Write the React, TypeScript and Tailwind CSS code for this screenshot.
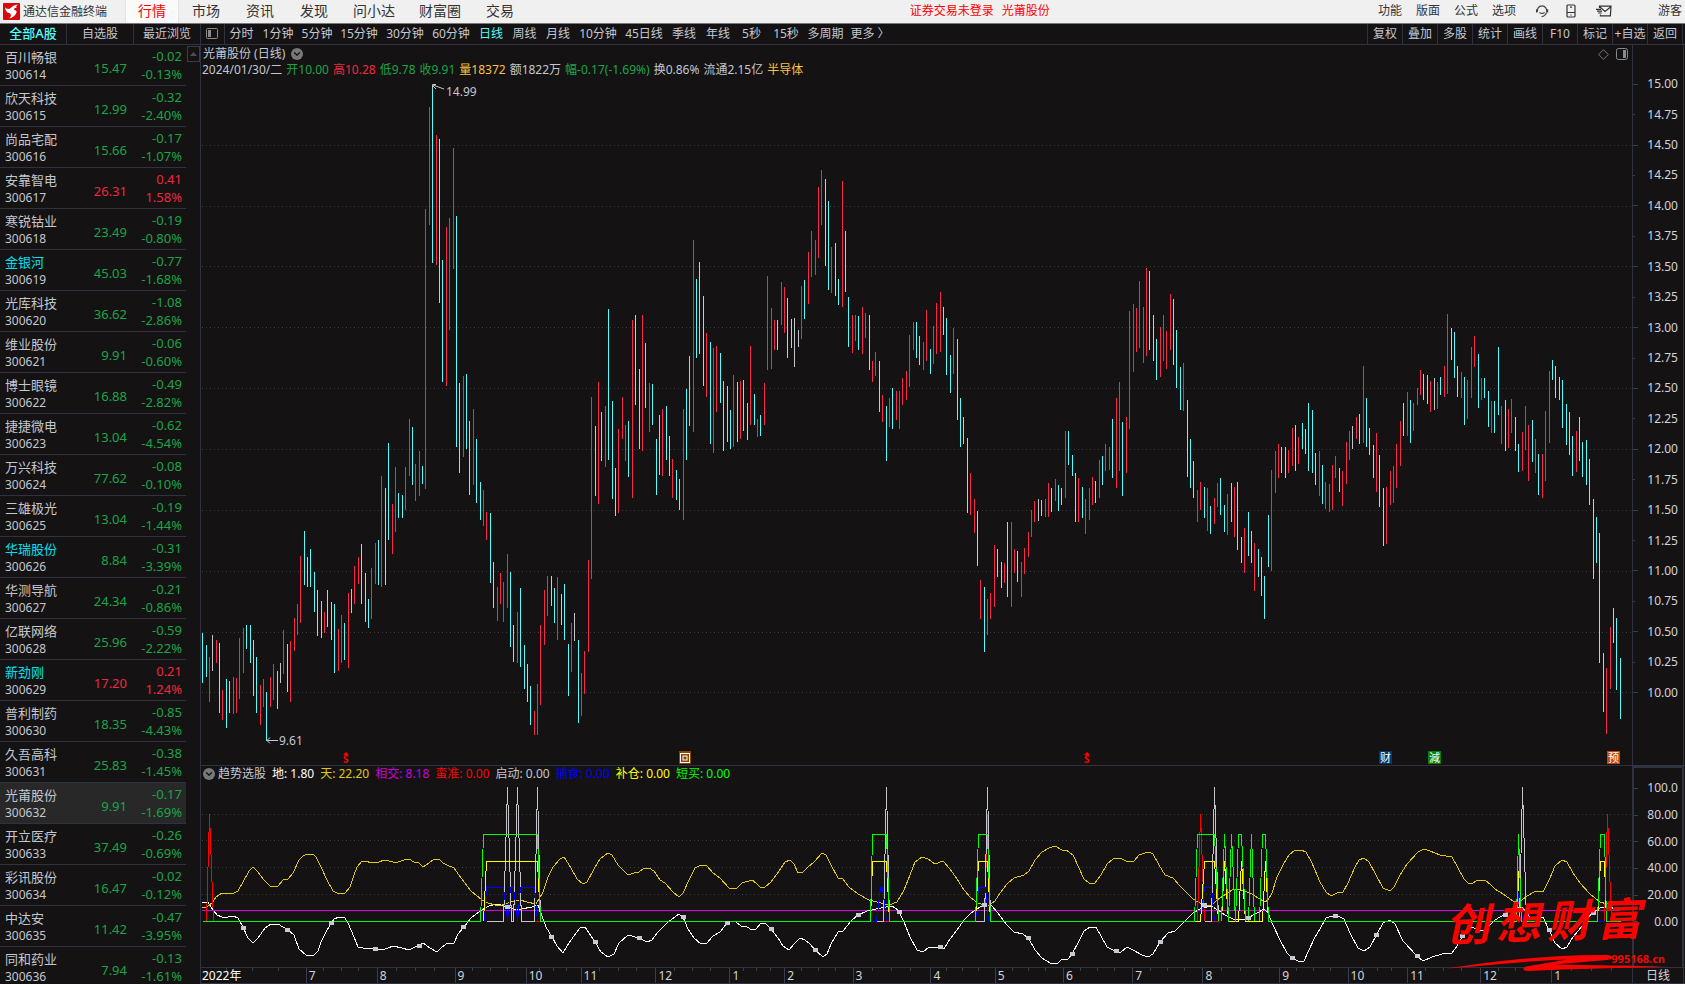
import React from "react";
import { ChevronDown } from "lucide-react";

type Stock = [name: string, code: string, price: string, change: string, pct: string, mark?: boolean];

const stocks: Stock[] = [
  ["百川畅银", "300614", "15.47", "-0.02", "-0.13%"],
  ["欣天科技", "300615", "12.99", "-0.32", "-2.40%"],
  ["尚品宅配", "300616", "15.66", "-0.17", "-1.07%"],
  ["安靠智电", "300617", "26.31", "0.41", "1.58%"],
  ["寒锐钴业", "300618", "23.49", "-0.19", "-0.80%"],
  ["金银河", "300619", "45.03", "-0.77", "-1.68%", true],
  ["光库科技", "300620", "36.62", "-1.08", "-2.86%"],
  ["维业股份", "300621", "9.91", "-0.06", "-0.60%"],
  ["博士眼镜", "300622", "16.88", "-0.49", "-2.82%"],
  ["捷捷微电", "300623", "13.04", "-0.62", "-4.54%"],
  ["万兴科技", "300624", "77.62", "-0.08", "-0.10%"],
  ["三雄极光", "300625", "13.04", "-0.19", "-1.44%"],
  ["华瑞股份", "300626", "8.84", "-0.31", "-3.39%", true],
  ["华测导航", "300627", "24.34", "-0.21", "-0.86%"],
  ["亿联网络", "300628", "25.96", "-0.59", "-2.22%"],
  ["新劲刚", "300629", "17.20", "0.21", "1.24%", true],
  ["普利制药", "300630", "18.35", "-0.85", "-4.43%"],
  ["久吾高科", "300631", "25.83", "-0.38", "-1.45%"],
  ["光莆股份", "300632", "9.91", "-0.17", "-1.69%"],
  ["开立医疗", "300633", "37.49", "-0.26", "-0.69%"],
  ["彩讯股份", "300634", "16.47", "-0.02", "-0.12%"],
  ["中达安", "300635", "11.42", "-0.47", "-3.95%"],
  ["同和药业", "300636", "7.94", "-0.13", "-1.61%"],
];

const menus: [string, string][] = [
  ["行情", "w-[54px]"],
  ["市场", "w-[54px]"],
  ["资讯", "w-[54px]"],
  ["发现", "w-[54px]"],
  ["问小达", "w-[66px]"],
  ["财富圈", "w-[66px]"],
  ["交易", "w-[54px]"],
];

const periods: [string, string][] = [
  ["分时", "w-[33px]"],
  ["1分钟", "w-[40px]"],
  ["5分钟", "w-[38px]"],
  ["15分钟", "w-[46px]"],
  ["30分钟", "w-[46px]"],
  ["60分钟", "w-[46px]"],
  ["日线", "w-[34px]"],
  ["周线", "w-[33px]"],
  ["月线", "w-[34px]"],
  ["10分钟", "w-[46px]"],
  ["45日线", "w-[46px]"],
  ["季线", "w-[34px]"],
  ["年线", "w-[34px]"],
  ["5秒", "w-[33px]"],
  ["15秒", "w-[36px]"],
  ["多周期", "w-[43px]"],
  ["更多 〉", "w-[46px]"],
];

const tools = ["复权", "叠加", "多股", "统计", "画线", "F10", "标记", "+自选", "返回"];

/* Bars are grouped by segment: an origin in plot units, then
   "kind x high low" offsets in thirds of a plot unit. */
const segments: { x: number; y: number; bars: string }[] = [
  {
    x: 200,
    y: 400,
    bars:
      "c 7 699 849,c 19 735 831,r 28 771 906,w 37 705 813,r 49 720 789,c 58 729 939,r 67 870 960,c 79 837 984,c 88 843 939,r 100 831 942,r 109 834 939,r 118 714 897,r 130 684 819,c 139 675 747,c 151 675 789,c 160 720 888,c 169 771 939,r 181 855 975,r 190 837 921,c 199 876 1023,r 211 831 921,r 220 792 900,c 232 813 927,w 241 789 849,r 250 690 822,c 262 732 876,r 271 723 906,r 283 654 753,r 292 612 705,r 301 468 669,c 313 393 555,c 322 471 561,c 331 447 561,c 343 516 636,c 352 570 708,c 364 603 714,r 373 636 699,c 382 570 681,c 394 606 720,c 403 612 819,r 415 687 813,r 424 645 789,c 433 669 780,r 445 579 804,w 454 567 639,r 463 498 612,r 475 471 552,c 484 432 612,c 496 519 666,c 505 597 684,r 514 504 657,r 526 429 552,c 535 420 555,r 544 228 561,c 556 264 555,c 565 129 420,r 577 312 462,r 586 201 396,c 595 279 354,c 607 285 354,r 616 201 330,r 628 57 228,c 637 81 255,r 646 192 303,r 658 153 288,c 667 198 252,r 676 -573 267,r 688 -879 -525,c 697 -942 -411,r 709 -795 -405,c 718 -783 -291,c 727 -420 -54,r 739 -519 -42,r 748 -546 -210,r 760 -756 -393,c 769 -552 141,c 778 -51 219,r 790 -72 171,c 799 -78 147,c 808 63 285,r 820 27 255,c 829 117 309,c 841 246 360,r 850 270 378,r 859 336 420,c 871 339 549,c 880 486 624,r 892 561 663,r 901 519 612,r 910 546 666,r 922 462 624,c 931 516 741,c 940 675 786,r 952 636 789,c 961 564 801,c 973 735 867,c 982 792 906,c 991 858 975,r 1003 933 1005,r 1012 852 1005,r 1021 675 915,r 1033 570 735,r 1042 528 648,c 1054 528 618,c 1063 564 669,r 1072 531 720,c 1084 582 675,c 1093 552 720,c 1105 732 888,r 1114 669 816,w 1123 639 723,c 1135 720 969,r 1144 819 948,r 1153 753 882,r 1165 480 756,r 1174 -9 537",
  },
  {
    x: 560,
    y: 130,
    bars:
      "c 106 888 1098,r 115 756 1122,c 124 846 993,r 136 828 1011,c 145 537 990,c 157 813 1107,c 166 1014 1158,r 175 897 1149,r 187 801 927,r 196 885 993,c 205 873 1041,r 217 570 1104,c 226 555 825,c 238 717 957,r 247 555 963,c 256 639 834,r 268 759 906,c 277 762 885,c 289 927 1095,c 298 855 1035,r 307 837 1038,c 319 828 990,c 328 918 1038,r 337 987 1104,c 349 1020 1110,c 358 1047 1140,r 370 837 1170,c 379 777 990,w 388 678 888,r 400 330 906,c 409 447 684,c 418 396 672,c 430 498 768,r 439 609 801,c 451 636 942,r 460 654 969,r 469 648 846,c 481 669 819,c 490 753 963,c 502 768 936,c 511 840 957,r 520 735 951,c 532 756 936,r 541 753 927,c 550 750 903,c 562 819 930,r 571 648 885,c 583 792 885,r 592 867 921,c 601 855 918,r 613 759 885,r 622 438 720,r 634 534 717,r 643 570 660,c 652 570 660,r 664 456 585,r 673 471 609,c 682 504 684,c 694 567 654,w 703 564 711,w 715 600 651,r 724 468 627,c 733 450 567,r 745 366 522,r 754 303 441,r 766 330 435,r 775 171 384,r 784 120 285,c 796 147 408,c 805 213 480,r 814 351 489,c 826 339 498,c 835 447 525,r 847 153 531,c 856 303 486,c 865 501 651,r 877 555 669,r 886 555 633,c 895 558 660,r 907 531 672,r 916 549 624,c 928 555 720,r 937 693 756,r 946 666 738,c 958 693 846,r 967 795 876,c 979 828 993,r 988 804 891,c 997 774 897,r 1009 783 870,r 1018 783 897,r 1027 744 825,r 1039 723 810,r 1048 615 771,r 1060 576 660,c 1069 576 684,c 1078 618 705,r 1090 636 720,r 1099 540 693,c 1111 657 732,r 1120 588 702,r 1129 519 672,r 1141 486 666,c 1150 531 615,c 1159 564 735,c 1171 675 789,r 1180 594 732,c 1192 627 870,c 1201 804 951,c 1210 861 942,c 1222 924 1149,r 1231 1029 1155",
  },
  {
    x: 950,
    y: 480,
    bars:
      "r 73 57 159,c 82 93 258,r 91 300 417,c 103 321 516,r 112 357 465,r 121 339 417,r 133 195 381,c 142 207 291",
  },
  {
    x: 1000,
    y: 240,
    bars:
      "c 4 966 1044,r 13 969 1029,c 22 846 1071,r 34 846 1101,r 43 927 999,c 52 933 1026,r 64 966 1071,r 73 924 1002,r 85 876 951,r 94 810 891,r 103 783 846,w 115 777 843,c 124 780 828,r 136 777 831,r 145 729 831,c 154 744 816,r 166 717 783,c 175 735 813,w 184 744 795,r 196 573 774,c 205 573 675,c 217 645 708,c 226 699 846,r 235 714 846,c 247 741 834,r 256 777 882,r 268 744 840,r 277 711 795,c 286 723 789,r 298 660 774,c 307 648 735,r 316 612 693,r 328 621 690,c 337 537 714,r 349 474 744,r 358 426 693,c 367 546 768,r 379 531 699,r 388 213 567,r 400 192 396,r 409 204 336,r 418 123 324,r 430 201 369,r 439 84 348,c 448 93 330,c 460 225 363,c 469 297 420,r 481 261 411,r 490 225 363,r 499 273 387,r 511 162 330,c 520 177 375,c 529 270 444,c 541 381 510,r 550 369 513,c 562 480 711,c 571 597 744,c 580 663 774,r 592 750 846,r 601 726 810,c 613 741 834,r 622 744 873,c 631 798 882,r 643 774 852,r 652 729 801,c 661 714 825,c 673 795 876,r 682 762 885,c 694 729 846,r 703 741 891,c 712 726 930,c 724 891 969,r 733 864 999,c 745 816 948",
  },
  {
    x: 1250,
    y: 280,
    bars:
      "c 4 753 849,r 13 789 933,c 25 807 891,c 34 831 948,c 43 888 1017,c 55 705 861,r 64 570 873,r 76 513 639,r 85 492 594,c 94 501 579,c 106 501 594,r 115 510 579,r 127 444 558,c 136 435 573,r 145 471 552,c 157 429 507,c 166 447 522,c 175 369 573,c 187 390 579,c 196 519 615,r 208 513 648,c 217 555 672,r 226 606 687,r 238 612 696,r 247 555 690,r 256 528 594,c 268 564 636,r 277 573 678,r 289 486 612,r 298 453 540,w 307 438 507,r 319 411 477,c 328 402 492,r 340 258 489,c 349 354 501,c 358 444 525,c 370 495 594,r 379 459 636,c 388 525 681,c 400 624 798,r 409 621 792,r 421 573 675,r 430 558 669,r 439 492 624,r 451 423 558,c 460 369 468,r 472 336 468,c 481 360 489,r 490 369 453,r 502 324 375,r 511 270 345,c 520 282 360,c 532 285 372,r 541 303 396,w 553 294 390,r 562 306 387,c 571 291 345,r 583 258 351,r 592 102 342,c 604 144 240,c 613 156 294,c 622 258 351,r 634 276 354,c 643 291 435,r 652 300 417,r 664 201 354,r 673 168 261,c 685 222 384,r 694 294 360,c 703 294 354,c 715 333 441,r 724 363 459,c 733 363 459,c 745 201 405,r 754 378 492,c 766 360 513,r 775 387 504,r 784 357 459,c 796 411 513,c 805 492 576,r 817 456 573,r 826 378 510,r 835 435 603,c 847 420 546,r 856 477 579,c 865 522 645,r 877 522 654,r 886 393 603,r 898 273 489,c 907 240 300,c 916 258 354,c 928 291 360,c 937 300 444,c 949 372 495,c 958 396 525,c 967 468 588,r 979 453 576,c 988 411 543,c 997 486 591,c 1009 480 615,c 1018 537 675,c 1030 657 897,c 1039 711 849,c 1048 759 1149,c 1060 1119 1296,r 1069 1164 1362,r 1081 1041 1227,c 1090 984 1089,c 1099 1014 1230,c 1111 1134 1317",
  },
];

const barColor: Record<string, string> = { c: "#54fcfc", r: "#f8284a", w: "#c2c5cc" };

const bars = segments.flatMap((s) =>
  s.bars.split(",").map((b) => {
    const [kind, x, high, low] = b.split(" ");
    const top = s.y + Math.round(+high / 3);
    return {
      fill: barColor[kind],
      x: s.x + Math.floor(+x / 3),
      y: top,
      h: s.y + Math.round(+low / 3) - top,
    };
  }),
);

const gridLines = [145, 206, 266, 327, 388, 449, 510, 571, 632, 692];
const subGridLines = [814, 840, 867, 894];

const priceLabels = Array.from({ length: 21 }, (_, i) => (15 - i * 0.25).toFixed(2));
const subLabels = ["100.0", "80.00", "60.00", "40.00", "20.00", "0.00"];

const heavenLine =
  "202,907 207,907 213,902 216,897 222,893 234,893 238,891 243,882 249,871 253,867 258,872 264,880 270,886 278,886 283,880 288,879 293,873 299,860 303,856 307,854 313,854 316,857 321,867 327,880 333,891 339,894 345,893 350,887 354,875 357,867 362,861 366,861 371,863 375,862 379,862 384,860 389,861 393,862 398,862 404,860 409,859 414,862 418,862 423,867 429,863 433,860 439,859 443,863 447,865 454,868 461,878 471,891 482,900 488,903 495,905 502,905 511,902 520,900 527,902 536,904 539,899 543,892 548,877 553,867 560,859 564,857 571,868 577,879 583,884 587,882 594,869 600,859 608,853 612,855 618,865 628,875 634,873 639,872 643,869 649,868 654,871 660,880 665,883 673,892 679,897 683,893 689,880 695,868 701,865 707,866 713,873 720,878 730,889 737,888 742,883 752,880 756,883 760,887 765,887 771,882 779,871 785,862 790,860 794,864 798,873 803,872 808,867 814,862 822,853 826,855 831,865 838,878 842,878 849,887 858,894 869,900 881,903 889,905 897,902 904,890 910,875 915,862 922,857 928,859 935,864 943,861 950,869 957,879 964,890 971,898 978,903 988,906 995,901 1000,893 1007,884 1014,878 1024,875 1029,871 1035,860 1042,852 1049,848 1055,846 1062,850 1066,850 1073,855 1079,868 1084,879 1089,883 1095,883 1101,875 1107,864 1113,859 1120,858 1128,862 1134,861 1139,855 1145,853 1149,852 1153,854 1159,865 1165,875 1173,878 1180,886 1193,899 1203,905 1212,905 1217,900 1223,896 1232,890 1238,889 1244,891 1252,894 1258,898 1265,902 1268,900 1272,893 1277,877 1283,865 1289,855 1295,850 1301,850 1306,852 1312,863 1320,882 1326,892 1331,896 1337,893 1343,892 1348,883 1355,867 1359,860 1364,858 1369,862 1376,875 1383,888 1390,891 1394,887 1400,875 1407,864 1418,852 1424,849 1430,851 1440,855 1452,857 1458,868 1464,879 1468,883 1473,883 1476,881 1485,880 1491,885 1495,889 1503,894 1513,901 1518,903 1527,896 1536,891 1543,892 1550,878 1555,866 1562,860 1567,862 1573,873 1580,883 1590,894 1600,902 1607,904 1612,901 1618,902";

const earthLine =
  "202,902 208,902 211,907 217,915 222,917 228,917 233,916 238,918 243,927 248,938 253,943 258,938 265,928 271,924 278,924 283,927 288,930 294,935 299,949 306,955 314,955 318,951 321,942 327,930 334,919 339,917 345,918 348,923 354,937 358,947 363,948 368,948 377,949 382,950 388,948 393,946 402,948 409,950 415,947 423,943 430,948 437,952 441,948 446,944 454,943 458,934 464,927 471,918 480,911 489,906 497,904 504,906 514,909 521,909 532,907 538,905 541,913 546,927 552,937 557,946 563,953 569,943 576,933 580,928 585,927 589,933 595,942 601,952 608,957 614,954 619,943 628,935 639,938 647,942 652,940 658,932 667,923 675,917 679,914 683,917 688,929 694,938 701,944 707,943 713,936 720,932 727,923 732,921 736,922 741,926 747,927 752,930 756,929 761,923 765,923 771,929 778,938 783,946 789,950 794,944 800,938 805,940 810,944 815,950 823,957 827,954 831,944 838,932 843,931 851,921 858,915 867,911 881,908 892,906 898,910 904,922 910,937 917,950 923,952 929,947 940,947 944,949 950,939 957,930 964,920 971,913 980,907 991,905 998,913 1007,925 1014,932 1023,934 1029,939 1035,950 1042,958 1050,963 1058,963 1062,959 1068,959 1072,954 1078,943 1084,931 1090,927 1096,927 1101,936 1107,947 1115,951 1120,953 1127,947 1133,950 1142,955 1148,957 1153,954 1160,942 1168,933 1175,931 1184,922 1193,913 1202,908 1211,906 1218,910 1225,915 1235,920 1246,919 1257,913 1264,909 1268,913 1273,925 1280,940 1287,953 1292,958 1298,961 1304,961 1309,950 1315,937 1320,929 1326,918 1332,916 1340,917 1344,919 1350,933 1358,948 1364,951 1370,947 1377,934 1383,923 1390,920 1395,924 1403,941 1417,956 1423,961 1432,957 1442,954 1452,953 1457,946 1463,936 1468,926 1474,928 1483,931 1488,927 1495,920 1505,914 1515,907 1522,907 1530,917 1543,917 1549,930 1555,943 1562,949 1567,947 1573,937 1583,925 1592,913 1600,908 1608,907 1617,909";

const markers: [number, number][] = [
  [243, 928], [287, 930], [331, 923], [375, 949], [419, 946], [463, 927], [507, 907], [551, 937],
  [595, 942], [639, 938], [683, 917], [727, 923], [771, 929], [815, 950], [858, 915], [899, 912],
  [940, 947], [984, 905], [1028, 938], [1072, 954], [1116, 951], [1160, 942], [1204, 905], [1248, 918],
  [1292, 958], [1335, 916], [1376, 935], [1417, 956], [1462, 936], [1505, 915], [1549, 930], [1593, 913],
];

const signals: [string, string][] = [
  ["#ff0000", "M206 921L209 814L213 921 M984 921L987 814L990 921 M1197 921L1200 814L1204 921 M1604 921L1607 814L1611 921 M534 921H540 M882 921H889 M1211 921H1218"],
  ["#c4c6cb", "M486 921H503L507 787L511 921H513L517 787L521 921H534L537 787L540 921 M876 921H883L886 787L889 921 M975 921H984L987 787L990 921 M1204 921H1211L1214 787L1218 921 M1519 921L1522 787L1526 921"],
  ["#0000ff", "M484 921L486 887H503L507 921L510 887H513L517 921L520 887H534L537 921 M870 921H876L880 887H882L886 921 M975 921L978 887H985L988 921 M1200 921L1204 887H1211L1214 921 M1516 921L1519 887L1522 921 M1597 921H1606"],
  ["#ffff00", "M483 921L486 861H537L540 921 M870 921L872 861H886L889 921 M975 921L978 861H987L990 921 M1194 921H1200L1204 861H1214L1218 921 M1221 921L1224 861L1228 921 M1228 921H1238L1241 861L1245 921H1262L1265 861L1268 921 M1516 921L1519 861L1521 921 M1597 921L1600 861H1604L1606 921"],
  ["#00ff00", "M202 921H480L483 834H537L540 921H870L872 834H886L889 921H975L978 834H987L990 921H1194L1197 834H1214L1218 921 M1221 921L1224 834L1228 921L1231 834L1235 921L1238 834H1241L1245 921 M1248 921L1251 834L1254 921 M1259 921L1262 834H1265L1268 921H1516L1518 834L1521 921H1597L1600 834H1604L1606 921H1620"],
];

const months: [string, number][] = [
  ["2022年", 108], ["7", 71], ["8", 78], ["9", 71], ["10", 54], ["11", 75], ["12", 74], ["1", 54],
  ["2", 68], ["3", 78], ["4", 64], ["5", 68], ["6", 69], ["7", 70], ["8", 77], ["9", 68],
  ["10", 59], ["11", 73], ["12", 71], ["1", 81],
];

const badges: [string, number, string][] = [
  ["财", 1379, "#023a6b"],
  ["減", 1428, "#088008"],
  ["预", 1607, "#c0480c"],
];

const quote: [string, string][] = [
  ["2024/01/30/二", "text-[#c4c7cf]"],
  ["开10.00", "text-[#1ba548]"],
  ["高10.28", "text-[#f0283f]"],
  ["低9.78", "text-[#1ba548]"],
  ["收9.91", "text-[#1ba548]"],
  ["量18372", "text-[#fbc141]"],
  ["额1822万", "text-[#c4c7cf]"],
  ["幅-0.17(-1.69%)", "text-[#1ba548]"],
  ["换0.86%", "text-[#c4c7cf]"],
  ["流通2.15亿", "text-[#c4c7cf]"],
  ["半导体", "text-[#fbc141]"],
];

const legend: [string, string][] = [
  ["地: 1.80", "text-white"],
  ["天: 22.20", "text-[#e0c814]"],
  ["相交: 8.18", "text-[#c800dc]"],
  ["蛮准: 0.00", "text-[#ff0000]"],
  ["启动: 0.00", "text-[#c4c6cb]"],
  ["捕食: 0.00", "text-[#0000ff]"],
  ["补仓: 0.00", "text-[#ffff00]"],
  ["短买: 0.00", "text-[#00ff00]"],
];

function Dots({ lines }: { lines: number[] }) {
  return (
    <g stroke="#3a3c44" strokeDasharray="1 3">
      {lines.map((y) => (
        <line key={y} x1="202" x2="1632" y1={y + 0.5} y2={y + 0.5} />
      ))}
    </g>
  );
}

function Dividend({ x }: { x: number }) {
  return (
    <g>
      <path d={`M${x + 3} 752l3 3h-6z`} fill="#ff0000" />
      <text x={x} y="763" fontSize="10" fontWeight="700" fill="#ff0000">
        S
      </text>
    </g>
  );
}

function RoundArrow() {
  return (
    <button aria-label="展开" className="flex size-3 items-center justify-center rounded-full bg-[#77787a] text-[#141213]">
      <ChevronDown size={10} strokeWidth={3} />
    </button>
  );
}

function Header() {
  return (
    <header className="flex h-6 shrink-0 items-center border-b border-[#77787a] bg-[#f0f0f0] text-xs text-[#333]">
      <div className="flex w-[125px] shrink-0 items-center gap-[3px] pl-[3px]">
        <svg width="17" height="17" viewBox="0 0 17 17" aria-hidden="true">
          <rect width="17" height="17" rx="1" fill="#d8090c" />
          <path
            d="M2 4.200C3.200 6 5.600 6.400 7.400 5.200C9 3.400 11.400 1.600 15.400 1.400C13.200 2.600 12.600 3.600 13.800 4.600C11.200 5 10.400 6 11.400 7C13.600 7.400 14 8.200 13.200 10.200C12 12.800 9.600 14.600 6.200 15.600C8.200 13.600 8.400 11.600 7 10.200C4.400 9.800 2.200 8 2 4.200Z"
            fill="#fff"
          />
        </svg>
        <span className="whitespace-nowrap">通达信金融终端</span>
      </div>
      <nav className="flex h-full shrink-0 text-sm">
        {menus.map(([label, width], i) => (
          <button
            key={label}
            className={`${width} h-full pb-[2px] ${
              i === 0 ? "border-x border-[#e2e2e2] bg-[#fbfbfb] text-[#ff0000]" : ""
            }`}
          >
            {label}
          </button>
        ))}
      </nav>
      <div className="grow-[7]" />
      <div className="flex gap-2 whitespace-nowrap pb-px text-[#ff0000]">
        <button>证券交易未登录</button>
        <button>光莆股份</button>
      </div>
      <div className="grow-[6]" />
      <div className="flex items-center gap-[14px] whitespace-nowrap pb-px">
        <button>功能</button>
        <button>版面</button>
        <button>公式</button>
        <button>选项</button>
      </div>
      <div className="flex items-center pb-px">
        <button aria-label="客服" className="ml-[19px]">
          <svg width="14" height="14" viewBox="0 0 14 14" fill="none" stroke="#444" strokeWidth="1.2">
            <path d="M2.500 8A4.700 4.700 0 1 1 11.500 8M11.600 8.400C10.600 11 9 12.400 6.600 12.600" />
            <path d="M1.600 5.200v3.200M12.600 5.200v3.200M4.400 8.400Q7 10.400 9.600 8.400" />
          </svg>
        </button>
        <button aria-label="手机" className="ml-[17px]">
          <svg width="10" height="14" viewBox="0 0 10 14" fill="none" stroke="#333" strokeWidth="1.2">
            <rect x="1" y="1" width="8" height="12" rx="1" />
            <path d="M1 8.500h8M4 3.200h2M4.400 11h1.200" />
          </svg>
        </button>
        <button aria-label="邮件" className="ml-5">
          <svg width="16" height="12" viewBox="0 0 16 12" fill="none" stroke="#333" strokeWidth="1.2">
            <path d="M3.500 3V1.200H15L14.400 10.800H4.400V9.400M4 2L9 6.400L14.600 2M0 4.400h5M1 6.200h5M2.200 8h3.500" />
          </svg>
        </button>
        <button className="ml-[46px] mr-[3px] whitespace-nowrap">游客</button>
      </div>
    </header>
  );
}

function Toolbar() {
  return (
    <div className="flex h-[21px] shrink-0 border-b border-[#2f3240] text-xs">
      <div className="flex w-[201px] shrink-0">
        {["全部A股", "自选股", "最近浏览"].map((t, i) => (
          <button
            key={t}
            className={`flex-1 whitespace-nowrap border-r border-[#2f3240] pb-px ${
              i === 0 ? "text-[13px] font-medium text-[#54fcfc]" : ""
            }`}
          >
            {t}
          </button>
        ))}
      </div>
      <button aria-label="侧栏" className="flex w-6 shrink-0 items-center justify-center border-r border-[#2f3240] pb-[2px] pr-px">
        <svg width="12" height="11" viewBox="0 0 12 11" fill="none" stroke="#8a8b8e">
          <rect x="0.5" y="0.5" width="11" height="10" rx="1" />
          <rect x="2" y="2" width="3" height="7" fill="#8a8b8e" stroke="none" />
        </svg>
      </button>
      {periods.map(([label, width]) => (
        <button
          key={label}
          className={`${width} shrink-0 whitespace-nowrap pb-px ${label === "日线" ? "text-[#54fcfc]" : ""}`}
        >
          {label}
        </button>
      ))}
      <div className="flex-1" />
      <div className="mr-[2px] flex shrink-0 border-l border-[#2f3240]">
        {tools.map((t) => (
          <button key={t} className="w-[35px] whitespace-nowrap border-r border-[#2f3240] pb-px">
            {t}
          </button>
        ))}
      </div>
    </div>
  );
}

function StockList() {
  return (
    <aside className="flex w-[200px] shrink-0 overflow-hidden">
      <ul className="w-[186px] text-[13px] leading-[18px]">
        {stocks.map(([name, code, price, change, pct, mark], i) => {
          const tone = change.startsWith("-") ? "text-[#1ba548]" : "text-[#f0283f]";
          return (
            <li
              key={code}
              className={`flex h-[41px] border-b border-[#2f3240] pl-[5px] pr-1 pt-[2px] ${i === 18 ? "bg-[#282828]" : ""}`}
            >
              <div className="w-[60px] pt-px">
                <div className={mark ? "text-[#00e0f0]" : ""}>{name}</div>
                <div className="text-xs leading-[18px]">{code}</div>
              </div>
              <div className={`w-[62px] pt-3 text-right ${tone}`}>{price}</div>
              <div className={`flex-1 text-right ${tone}`}>
                <div>{change}</div>
                <div>{pct}</div>
              </div>
            </li>
          );
        })}
      </ul>
      <button aria-label="向上" className="ml-px mt-px flex h-4 w-[13px] items-center justify-center border border-[#3a3c44]">
        <svg width="7" height="4" viewBox="0 0 7 4">
          <path d="M0 4L3.500 0L7 4Z" fill="#4c4e56" />
        </svg>
      </button>
    </aside>
  );
}

function PricePanel() {
  return (
    <section className="flex min-h-0 flex-1">
      <div className="flex min-w-0 flex-1 flex-col">
        <div className="h-8 shrink-0 whitespace-nowrap pl-px pt-px text-xs leading-4">
          <div className="flex h-4 items-center gap-[6px] pl-px">
            <span>光莆股份 (日线)</span>
            <RoundArrow />
            <div className="ml-auto flex items-center gap-[7px] pr-1">
              <svg width="11" height="11" viewBox="0 0 11 11" fill="none" stroke="#77787a">
                <path d="M5.500 0.700L10.300 5.500L5.500 10.300L0.700 5.500Z" />
              </svg>
              <svg width="12" height="12" viewBox="0 0 12 12" fill="none" stroke="#8a8b8e">
                <rect x="0.5" y="0.5" width="11" height="11" rx="2" />
                <rect x="7" y="2" width="3" height="8" fill="#8a8b8e" stroke="none" />
              </svg>
            </div>
          </div>
          <div className="flex gap-1">
            {quote.map(([t, c]) => (
              <span key={t} className={c}>
                {t}
              </span>
            ))}
          </div>
        </div>
        <svg className="min-h-0 w-full flex-1" viewBox="201 77 1431 688" preserveAspectRatio="none">
          <g shapeRendering="crispEdges">
            <Dots lines={gridLines} />
            {bars.map((b) => (
              <rect key={b.x} x={b.x} y={b.y} width="1" height={b.h} fill={b.fill} />
            ))}
          </g>
          <g fill="none" stroke="#c4c7cf">
            <path d="M432.500 89v-4.500h3.500M433 85l11 4M433 86l3 3" />
            <path d="M267 740.500h11M270 737.500l-3 3l3 3" />
          </g>
          <g fill="#c4c7cf" fontSize="12">
            <text x="446" y="96">14.99</text>
            <text x="279" y="745">9.61</text>
          </g>
          <Dividend x={343} />
          <Dividend x={1084} />
          <g fill="none">
            <rect x="679" y="751" width="12" height="13" fill="#8a4300" />
            <rect x="680.5" y="753.5" width="9" height="9" stroke="#fff" />
            <rect x="683" y="756" width="4" height="4" stroke="#fff" />
          </g>
          {badges.map(([t, x, fill]) => (
            <g key={t}>
              <rect x={x} y="751" width="13" height="13" fill={fill} />
              <text x={x + 1} y="762" fontSize="11" fill="#fff">
                {t}
              </text>
            </g>
          ))}
        </svg>
      </div>
      <div className="mr-px flex w-[52px] shrink-0 flex-col border-x border-[#2f3240] pb-[57px] pt-6 text-xs leading-4 text-[#d2d4da]">
        {priceLabels.map((p, i) => (
          <div key={p} className="flex flex-1 items-center justify-between pr-[5px]">
            <span className={`h-px bg-[#3a3d4a] ${i % 2 === 0 ? "w-[5px]" : "w-[2px]"}`} />
            {p}
          </div>
        ))}
      </div>
    </section>
  );
}

function IndicatorPanel() {
  return (
    <section className="flex h-[202px] shrink-0 border-t border-[#2f3240]">
      <div className="flex min-w-0 flex-1 flex-col">
        <div className="flex h-4 shrink-0 items-center gap-[3px] whitespace-nowrap pl-[2px] text-xs leading-4">
          <RoundArrow />
          <div className="flex gap-[6px]">
            <span>趋势选股</span>
            {legend.map(([t, c]) => (
              <span key={t} className={c}>
                {t}
              </span>
            ))}
          </div>
        </div>
        <svg className="min-h-0 w-full flex-1" viewBox="201 782 1431 185" preserveAspectRatio="none">
          <g shapeRendering="crispEdges" fill="none">
            <Dots lines={subGridLines} />
            <path d="M202 910.500H1620" stroke="#d800e8" />
            <polyline points={earthLine} stroke="#fff" />
            <polyline points={heavenLine} stroke="#e0c814" />
            {signals.map(([stroke, d]) => (
              <path key={stroke} d={d} stroke={stroke} transform="translate(0.5 0.5)" />
            ))}
            {markers.map(([x, y]) => (
              <rect key={x} x={x - 2} y={y - 2} width="5" height="4" fill="#c8cad2" />
            ))}
          </g>
        </svg>
      </div>
      <div className="mr-px flex w-[52px] shrink-0 flex-col border-2 border-b-0 border-[#2f3240] pb-8 pt-[7px] text-xs leading-4 text-[#d2d4da]">
        {subLabels.map((p) => (
          <div key={p} className="flex flex-1 items-center justify-between pr-1">
            <span className="h-px w-1 bg-[#3a3d4a]" />
            {p}
          </div>
        ))}
      </div>
    </section>
  );
}

function TimeAxis() {
  return (
    <div className="flex h-[17px] shrink-0 border-y border-[#2f3240] text-xs leading-[16px] text-[#d2d4da]">
      <div className="flex min-w-0 flex-1">
        {months.map(([m, span], i) => (
          <div
            key={i}
            style={{ flexGrow: span, flexBasis: 0 }}
            className={`relative min-w-0 whitespace-nowrap ${i ? "border-l border-[#3a3d4a] pl-[2px]" : "pl-px text-white"}`}
          >
            <div className="absolute inset-x-0 top-0 grid h-[3px] grid-cols-4 divide-x divide-[#3a3d4a]">
              <span />
              <span />
              <span />
              <span />
            </div>
            {m}
          </div>
        ))}
      </div>
      <div className="mr-px w-[52px] shrink-0 border-x border-[#2f3240] text-center">日线</div>
    </div>
  );
}

function Brand() {
  return (
    <div className="pointer-events-none absolute bottom-3 right-[18px] w-[222px] text-[#f80400]">
      <div className="flex w-[196px] -rotate-2 justify-between whitespace-nowrap text-[44px] font-semibold italic leading-[60px]">
        <span>创</span>
        <span>想</span>
        <span>财</span>
        <span>富</span>
      </div>
      <div className="relative h-[21px]">
        <svg className="absolute inset-0" width="222" height="21" viewBox="0 0 222 21" fill="#f80400">
          <path d="M2 17.500C50 10 110 3 163 4C170 5 168 8 162 9L110 13.500C150 14.500 190 14 220 16C180 17 130 17.500 82 20C76 19 78 16 84 15L122 8.500C84 10 44 14 2 17.500Z" />
        </svg>
        <span className="absolute right-[2px] top-0 text-[11px] font-bold leading-4">995168.cn</span>
      </div>
    </div>
  );
}

export default function App() {
  return (
    <div className="relative flex h-screen flex-col overflow-hidden bg-[#141213] font-['Noto_Sans','Noto_Sans_CJK_SC',sans-serif] text-[#c4c7cf]">
      <Header />
      <Toolbar />
      <div className="flex min-h-0 flex-1">
        <StockList />
        <main className="flex min-w-0 flex-1 flex-col border-l border-[#2f3240]">
          <PricePanel />
          <IndicatorPanel />
          <TimeAxis />
        </main>
      </div>
      <Brand />
    </div>
  );
}
